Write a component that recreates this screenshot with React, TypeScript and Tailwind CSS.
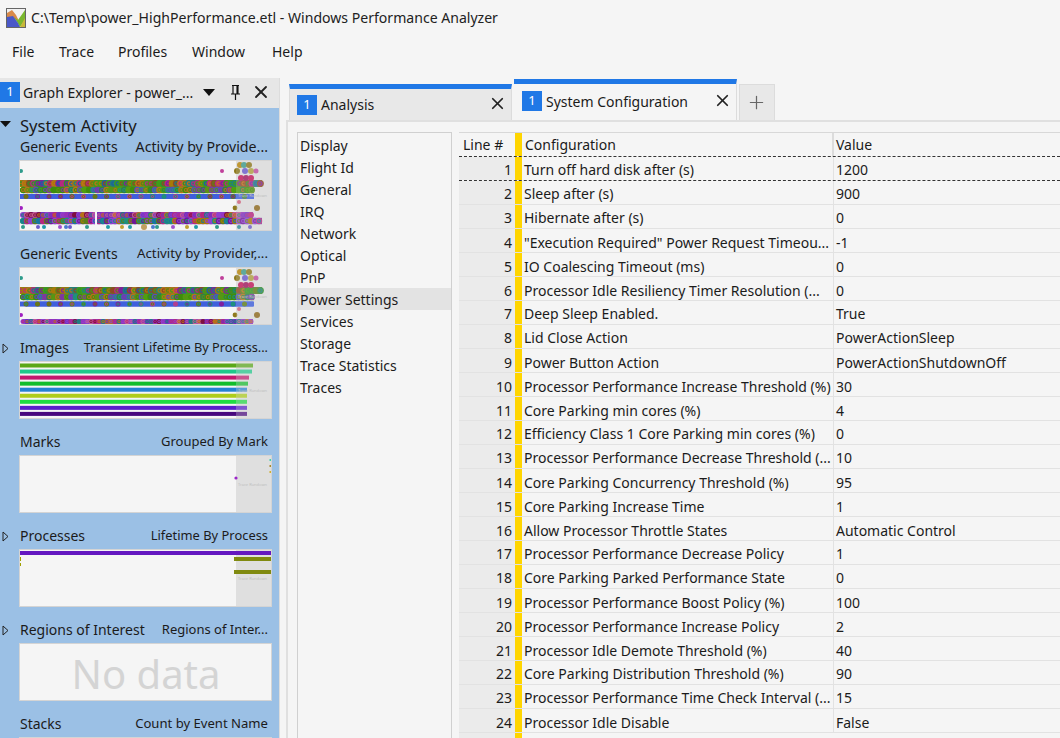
import { X, Plus } from "lucide-react";

const rows: [string, string][] = [
  ["Turn off hard disk after (s)", "1200"],
  ["Sleep after (s)", "900"],
  ["Hibernate after (s)", "0"],
  ['"Execution Required" Power Request Timeou...', "-1"],
  ["IO Coalescing Timeout (ms)", "0"],
  ["Processor Idle Resiliency Timer Resolution (...", "0"],
  ["Deep Sleep Enabled.", "True"],
  ["Lid Close Action", "PowerActionSleep"],
  ["Power Button Action", "PowerActionShutdownOff"],
  ["Processor Performance Increase Threshold (%)", "30"],
  ["Core Parking min cores (%)", "4"],
  ["Efficiency Class 1 Core Parking min cores (%)", "0"],
  ["Processor Performance Decrease Threshold (...", "10"],
  ["Core Parking Concurrency Threshold (%)", "95"],
  ["Core Parking Increase Time", "1"],
  ["Allow Processor Throttle States", "Automatic Control"],
  ["Processor Performance Decrease Policy", "1"],
  ["Core Parking Parked Performance State", "0"],
  ["Processor Performance Boost Policy (%)", "100"],
  ["Processor Performance Increase Policy", "2"],
  ["Processor Idle Demote Threshold (%)", "40"],
  ["Core Parking Distribution Threshold (%)", "90"],
  ["Processor Performance Time Check Interval (...", "15"],
  ["Processor Idle Disable", "False"],
];

// text in the reference steps unevenly, these rows sit 1px lower
const shifted = new Set([4, 5, 6, 9, 10, 11, 14, 15, 16, 19, 20, 21, 24]);

const navItems = ["Display", "Flight Id", "General", "IRQ", "Network", "Optical", "PnP", "Power Settings", "Services", "Storage", "Trace Statistics", "Traces"];

const warm = ["#a87a08", "#1f7f7f", "#7f1fa0", "#c0701a", "#2f8f2f", "#b8287f", "#5f7f1a", "#1e5fa0", "#8f4a22", "#3f9f18"];
const greens = ["#3f8d0c", "#5f8f18", "#2f7f48", "#7f38a0", "#1f8f7f", "#4f9f10", "#b8701a", "#5a4abd"];
const blues = ["#707018", "#1f8f7f", "#7f1fa0", "#5f7f1a", "#b03f90"];
const purples = ["#9040d0", "#9830b8", "#b8701a", "#1f7f7f", "#b8287f", "#6f30c0", "#7f1040", "#c8608f"];
const teals = ["#1f8f7f", "#9040d0", "#5f7f1a", "#b8287f", "#1678a0", "#6f1898", "#a87a08"];

function rand(seed: number) {
  let s = seed;
  return () => {
    s = (s * 16807) % 2147483647;
    return s / 2147483647;
  };
}

function Band({ y, from, to, step, seed, r, colors, fill }: { y: number; from: number; to: number; step: number; seed: number; r: number; colors: string[]; fill: string }) {
  const next = rand(seed);
  const pick = () => colors[Math.floor(next() * colors.length)];
  const dots = [];
  for (let x = from; x < to; x += step) {
    const a = pick();
    dots.push(
      <g key={x}>
        <circle cx={x} cy={y} r={r} fill={a} />
        <circle cx={x} cy={y} r={r * 0.62} fill={pick()} />
        <circle cx={x} cy={y} r={r * 0.28} fill={a} />
      </g>
    );
  }
  return (
    <>
      <rect x={from} y={y - r} width={to - from} height={r * 2} fill={fill} />
      {dots}
    </>
  );
}

function Spots({ items }: { items: [number, number, string, number?][] }) {
  return (
    <>
      {items.map(([x, y, c, r], i) => (
        <circle key={i} cx={x} cy={y} r={r ?? 2} fill={c} />
      ))}
    </>
  );
}

const topSpots: [number, number, string, number?][] = [
  [1, 10, "#2e9b8b", 2],
  [202, 10, "#c0409a", 2],
  [220, 4, "#b8860b", 3],
  [224, 4, "#3f9b8b", 3],
  [229, 4, "#8e7a1e", 3],
  [217, 10, "#8e7a1e", 3],
  [225, 10, "#6a5acd", 3],
  [231, 10, "#b0a040", 3],
  [236, 10, "#c04fa0", 2.5],
  [221, 17, "#c2185b", 3],
  [226, 17, "#a01a60", 3],
  [231, 17, "#c2185b", 3],
];

const lowSpots: [number, number, string, number?][] = [
  [1, 47, "#a020c0", 2],
  [219, 41, "#d0607a", 2],
  [215, 47, "#8e7a1e", 2.4],
  [237, 47, "#8e6a1e", 3],
];

const bottomSpots: [number, number, string, number?][] = [
  [3, 66, "#2e9b8b", 2],
  [18, 66, "#6a5acd", 2],
  [24, 66, "#1e9ba8", 2],
  [40, 66, "#a050d0", 2],
  [46, 66, "#4a7ad0", 2],
  [50, 66, "#6a5acd", 2],
  [67, 66, "#2e9b8b", 2],
  [88, 66, "#1e9ba8", 2],
  [102, 66, "#c0a030", 2],
  [110, 66, "#1e9ba8", 2],
  [124, 66, "#c0a060", 3],
  [133, 66, "#4a7ad0", 2],
  [137, 66, "#2e9b8b", 2],
  [153, 66, "#a050d0", 2],
  [167, 66, "#c0a030", 2],
  [176, 66, "#1e9ba8", 2],
  [197, 66, "#2e9b8b", 2],
  [219, 66, "#2e8b9b", 2],
  [230, 66, "#6a5acd", 2],
];

function EventsOne() {
  return (
    <svg width="251" height="69" className="absolute left-0 top-0 blur-[0.3px]">
      <Band y={22.5} from={1} to={242} step={4.2} seed={11} r={3.5} colors={warm} fill="#4f7f4a" />
      <Band y={29} from={3} to={234} step={4.4} seed={21} r={3.2} colors={greens} fill="#4f9020" />
      <rect x="0" y="33" width="233" height="5" fill="#3f5fdc" />
      <Band y={35.5} from={6} to={234} step={11.5} seed={31} r={2.5} colors={blues} fill="#3f5fdc" />
      <Band y={54} from={3} to={233} step={4} seed={41} r={3} colors={purples} fill="#8040c8" />
      <Band y={60} from={3} to={242} step={4} seed={51} r={3.2} colors={teals} fill="#7040a8" />
      <rect x="75" y="50" width="2" height="14" fill="#f5f5f5" />
      <Spots items={topSpots} />
      <Spots items={lowSpots} />
      <Spots items={bottomSpots} />
      <rect x="216" y="0" width="35" height="69" fill="#dfdfdf" opacity="0.2" />
    </svg>
  );
}

function EventsTwo() {
  return (
    <svg width="251" height="56" className="absolute left-0 top-0 blur-[0.3px]">
      <Band y={22.5} from={1} to={242} step={4.2} seed={12} r={3.5} colors={warm} fill="#4f7f4a" />
      <Band y={29} from={3} to={234} step={4.4} seed={22} r={3.2} colors={greens} fill="#4f9020" />
      <rect x="0" y="33.5" width="233" height="5" fill="#3f5fdc" />
      <Band y={36} from={6} to={234} step={11.5} seed={32} r={2.5} colors={blues} fill="#3f5fdc" />
      <Band y={53.5} from={3} to={233} step={4} seed={42} r={2.5} colors={purples} fill="#8040c8" />
      <Spots items={topSpots} />
      <Spots items={lowSpots} />
      <rect x="216" y="0" width="35" height="56" fill="#dfdfdf" opacity="0.2" />
    </svg>
  );
}

const imageBars: [number, string][] = [
  [233, "#5aa818"],
  [232, "#1ec98a"],
  [229, "#c2186e"],
  [228, "#12bd2c"],
  [227, "#2582d4"],
  [227, "#aecd1a"],
  [227, "#20dc42"],
  [227, "#5a1ecb"],
  [227, "#48087e"],
];

function ImageBars() {
  return (
    <svg width="251" height="56" className="absolute left-0 top-0">
      {imageBars.map(([w, c], i) => (
        <rect key={i} x="0" y={1.5 + i * 6.05} width={w} height="4" fill={c} />
      ))}
      <rect x="216" y="0" width="35" height="56" fill="#dfdfdf" opacity="0.3" />
    </svg>
  );
}

function MarksChart() {
  return (
    <svg width="251" height="56" className="absolute left-0 top-0">
      <circle cx="216" cy="22" r="1.6" fill="#9c27c8" />
      <rect x="249.5" y="3" width="1.5" height="2" fill="#3fd0b0" />
      <rect x="249.5" y="9" width="1.5" height="2" fill="#a88a30" />
      <rect x="249.5" y="15" width="1.5" height="2" fill="#d0b030" />
    </svg>
  );
}

function ProcessChart() {
  return (
    <svg width="251" height="56" className="absolute left-0 top-0">
      <rect x="0" y="1" width="251" height="4" fill="#6418c0" />
      <rect x="214" y="7" width="37" height="4" fill="#808a10" />
      <rect x="214" y="20" width="37" height="4" fill="#808a10" />
      <rect x="0" y="7" width="1" height="4" fill="#a0a000" />
      <rect x="0" y="13" width="1" height="3" fill="#a0a000" />
    </svg>
  );
}

function Rundown({ top }: { top: number }) {
  return (
    <span className="absolute right-[4px] whitespace-nowrap text-[4px] leading-[5px] text-[#c0c0c0]" style={{ top }}>
      Trace Rundown
    </span>
  );
}

function Item({
  name,
  view,
  expander,
  height,
  viewClass = "text-[13px]",
  shade = true,
  children,
}: {
  name: string;
  view: string;
  expander?: boolean;
  height: number;
  viewClass?: string;
  shade?: boolean;
  children?: React.ReactNode;
}) {
  return (
    <div>
      <div className="flex h-[24px] items-center justify-between pb-[2px] pl-[20px] pr-[11px] text-[14px] text-[#1b1b1b]">
        <span className="whitespace-nowrap pb-[2px]">{name}</span>
        <span className={`whitespace-nowrap ${viewClass}`}>{view}</span>
        {expander && (
          <svg width="7" height="11" viewBox="0 0 7 11" className="absolute left-[2px]">
            <path d="M1 1 L6 5.5 L1 10 Z" fill="none" stroke="#222" strokeWidth="1" />
          </svg>
        )}
      </div>
      <div className="relative mx-[19px] w-[253px] overflow-hidden border border-[#d4d4d4] bg-[#f5f5f5]" style={{ height }}>
        {shade && <div className="absolute bottom-0 right-0 top-0 w-[35px] bg-[#dfdfdf]" />}
        {children}
      </div>
    </div>
  );
}

function Badge() {
  return <span className="flex h-[20px] w-[20px] shrink-0 items-center justify-center bg-[#2078e6] text-[13px] text-white">1</span>;
}

function Logo() {
  return (
    <svg width="20" height="20" viewBox="0 0 20 20" className="shrink-0">
      <rect width="20" height="20" fill="#f2f2f2" />
      <path d="M1 11 V5 L6 2 L10 7 L13 13 L5 10 Z" fill="#d98a4a" />
      <path d="M8 9 L12 12 L19 2 V12 L14 19 Z" fill="#7ab82e" />
      <path d="M1 19 V9 L7 8 L12 15 L14 19 Z" fill="#4a58c8" />
      <path d="M14 19 L19 10 V19 Z" fill="#c8b838" />
      <rect x="0.5" y="0.5" width="19" height="19" fill="none" stroke="#666" />
    </svg>
  );
}

function PinIcon() {
  return (
    <svg width="9" height="15" viewBox="0 0 9 15" className="mr-[11px] shrink-0">
      <path d="M1 0.5 H8 M2 1 V8.5 M6.5 1 V8.5 M0 9 H9 M4.5 9 V15" fill="none" stroke="#111" strokeWidth="1.2" />
      <rect x="5.5" y="1" width="2" height="8" fill="#111" />
    </svg>
  );
}

export default function App() {
  return (
    <div className="h-[738px] w-[1060px] overflow-hidden bg-[#f5f5f5] text-[14px] text-[#1b1b1b]" style={{ fontFamily: '"Noto Sans", sans-serif' }}>
      {/* Title bar */}
      <div className="flex h-[36px] items-center gap-[5px] pl-[6px] text-[14.07px] text-[#222]">
        <Logo />
        <span>C:\Temp\power_HighPerformance.etl - Windows Performance Analyzer</span>
      </div>

      {/* Menu */}
      <div className="flex h-[42px] pl-[12px] pt-[5px]">
        <span className="w-[47px]">File</span>
        <span className="w-[59px]">Trace</span>
        <span className="w-[74px]">Profiles</span>
        <span className="w-[80px]">Window</span>
        <span>Help</span>
      </div>

      <div className="flex">
        {/* Graph Explorer */}
        <div className="relative h-[660px] w-[280px] shrink-0 border-r border-[#dcdcdc] bg-[#9bc0e5]">
          <div className="flex h-[30px] items-center bg-[#e6e6e6] pb-[2px] pr-[8px]">
            <Badge />
            <span className="ml-[3px] flex-1">Graph Explorer - power_...</span>
            <svg width="12" height="7" viewBox="0 0 12 7" className="mr-[16px]">
              <path d="M0 0 H12 L6 7 Z" fill="#111" />
            </svg>
            <PinIcon />
            <X size={20} className="text-[#222]" strokeWidth={2.2} />
          </div>

          <div className="flex h-[28px] pl-[20px] pt-[6px] text-[16.6px] leading-[24px] text-[#1b1b1b]">
            <svg width="11" height="6" viewBox="0 0 11 6" className="absolute left-0 top-[43px]">
              <path d="M0 0 H11 L5.5 6 Z" fill="#111" />
            </svg>
            System Activity
          </div>

          <Item name="Generic Events" view="Activity by Provide..." height={71} viewClass="text-[14.2px]">
            <EventsOne />
            <Rundown top={32} />
          </Item>
          <div className="mt-[12px] flex flex-col gap-[12px]">
            <Item name="Generic Events" view="Activity by Provider,..." height={58} viewClass="text-[13.3px]">
              <EventsTwo />
              <Rundown top={26} />
            </Item>
            <Item name="Images" view="Transient Lifetime By Process..." height={58} viewClass="text-[12.7px]" expander>
              <ImageBars />
              <Rundown top={26} />
            </Item>
            <Item name="Marks" view="Grouped By Mark" height={58}>
              <MarksChart />
              <Rundown top={26} />
            </Item>
            <Item name="Processes" view="Lifetime By Process" height={58} viewClass="text-[12.9px]" expander>
              <ProcessChart />
              <Rundown top={26} />
            </Item>
            <Item name="Regions of Interest" view="Regions of Inter..." height={58} shade={false} expander>
              <div className="absolute inset-0 flex items-center justify-center pl-px pt-[3px] text-[40px] text-[#d4d4d4]">No data</div>
            </Item>
            <Item name="Stacks" view="Count by Event Name" height={58} viewClass="text-[13.1px]" />
          </div>
        </div>

        {/* Analysis area */}
        <div className="ml-[6px] flex-1">
          <div className="flex h-[42px] items-end pl-[3px]">
            <div className="flex h-[36px] w-[223px] items-center border-x border-[#dcdcdc] border-t-[5px] border-t-[#2078e6] bg-[#e8e8e8] pl-[7px] pr-[4px]">
              <Badge />
              <span className="ml-[4px] flex-1">Analysis</span>
              <X size={19} className="mb-[3px] text-[#222]" strokeWidth={2.2} />
            </div>
            <div className="ml-[2px] flex h-[41px] w-[223px] items-center border-r border-[#dcdcdc] border-t-[5px] border-t-[#2078e6] bg-[#f5f5f5] pb-[2px] pl-[8px] pr-[4px]">
              <Badge />
              <span className="ml-[4px] flex-1">System Configuration</span>
              <X size={19} className="mb-[2px] text-[#222]" strokeWidth={2.2} />
            </div>
            <div className="ml-[2px] flex h-[36px] w-[36px] items-center justify-center border-x border-t border-[#dcdcdc] bg-[#e8e8e8] pr-[2px]">
              <Plus size={21} className="text-[#666]" strokeWidth={1.4} />
            </div>
          </div>

          <div className="flex h-[618px] gap-[7px] border-l-2 border-t-2 border-[#e0e0e0] pl-[9px] pt-[10px]">
            {/* Table list */}
            <div className="h-[700px] w-[155px] shrink-0 border border-[#d0d0d0] py-[1px]">
              {navItems.map((n) => (
                <div key={n} className={`flex h-[22px] items-center pl-[2px] ${n === "Power Settings" ? "bg-[#e3e3e3]" : ""}`}>
                  {n}
                </div>
              ))}
            </div>

            {/* Grid */}
            <div className="flex-1">
              <div className="flex h-[25px] border-b border-t border-b-[#333] border-t-[#d8d8d8] [border-bottom-style:dashed]">
                <div className="flex w-[56px] items-center pl-[4px]">Line #</div>
                <div className="w-[7px] shrink-0 bg-[#ffd500]" />
                <div className="flex w-[312px] items-center border-r-2 border-[#dcdcdc] pl-[3px]">Configuration</div>
                <div className="flex items-center pl-[2px]">Value</div>
              </div>
              {rows.map(([conf, val], i) => {
                const pad = shifted.has(i + 1) ? "pt-[3px]" : "pt-[2px]";
                return (
                  <div key={i} className={`flex h-[24px] border-b ${i === 0 ? "border-dashed border-[#333]" : "border-[#e2e2e2]"}`}>
                    <div className={`w-[56px] bg-[#ebebeb] pr-[3px] text-right ${pad}`}>{i + 1}</div>
                    <div className="w-[7px] shrink-0 bg-[#ffd500]" />
                    <div className={`w-[312px] truncate border-r border-[#e2e2e2] pl-[2px] ${pad}`}>{conf}</div>
                    <div className={`pl-[2px] ${pad}`}>{val}</div>
                  </div>
                );
              })}
              <div className="flex h-[24px]">
                <div className="w-[56px] bg-[#ebebeb]" />
                <div className="w-[7px] shrink-0 bg-[#ffd500]" />
              </div>
            </div>
          </div>
        </div>
      </div>
    </div>
  );
}
